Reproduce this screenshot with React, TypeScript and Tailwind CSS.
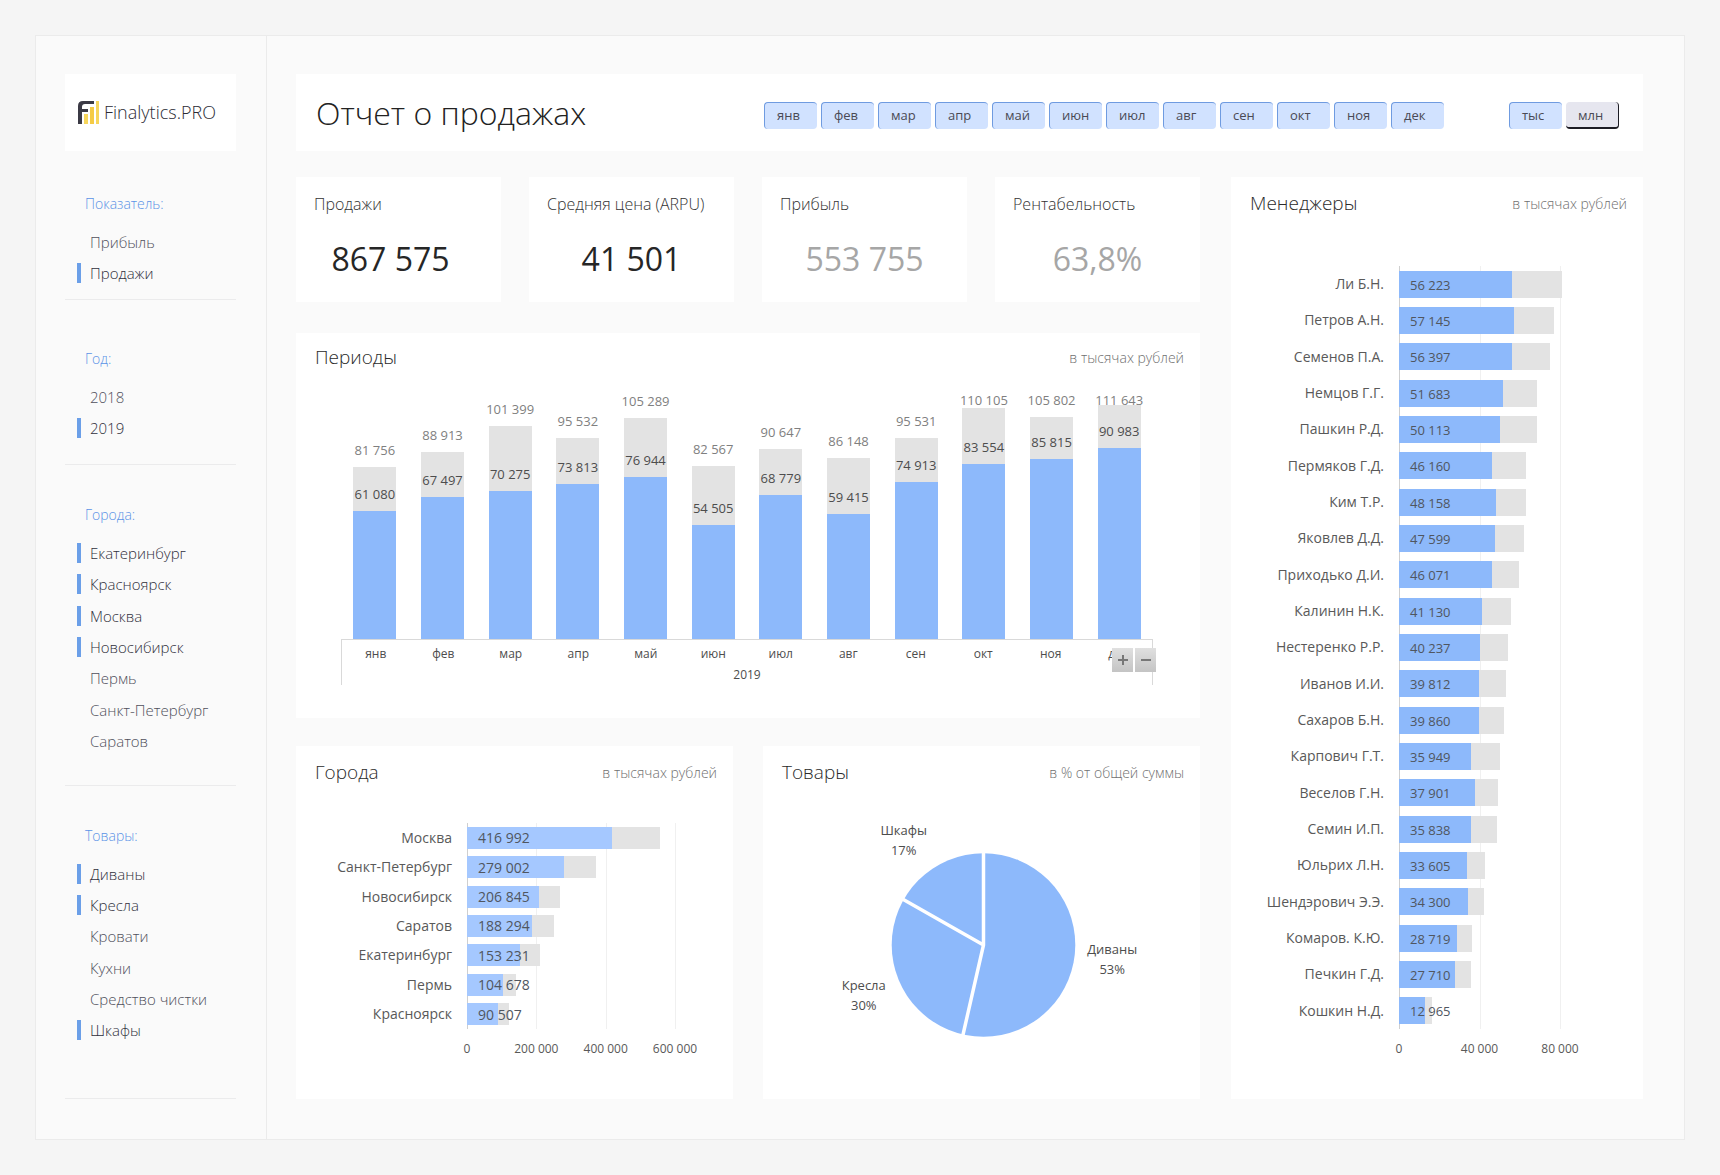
import { useState } from "react";

const months = ["янв", "фев", "мар", "апр", "май", "июн", "июл", "авг", "сен", "окт", "ноя", "дек"];

const filters = [
  { title: "Показатель:", items: ["Прибыль", "Продажи"], selected: ["Продажи"], pad: "pt-[43px] pb-[10px]", list: "h-[63px]" },
  { title: "Год:", items: ["2018", "2019"], selected: ["2019"], pad: "pt-[49px] pb-[20px]", list: "h-[63px]" },
  {
    title: "Города:",
    items: ["Екатеринбург", "Красноярск", "Москва", "Новосибирск", "Пермь", "Санкт-Петербург", "Саратов"],
    selected: ["Екатеринбург", "Красноярск", "Москва", "Новосибирск"],
    pad: "pt-[40px] pb-[28px]",
    list: "h-[220px]",
  },
  {
    title: "Товары:",
    items: ["Диваны", "Кресла", "Кровати", "Кухни", "Средство чистки", "Шкафы"],
    selected: ["Диваны", "Кресла", "Шкафы"],
    pad: "pt-[40px] pb-[52px]",
    list: "h-[188px]",
  },
];

const kpis = [
  { title: "Продажи", value: "867 575", tone: "text-[#262626] pr-4" },
  { title: "Средняя цена (ARPU)", value: "41 501", tone: "text-[#262626]" },
  { title: "Прибыль", value: "553 755", tone: "text-[#a6a6a6]" },
  { title: "Рентабельность", value: "63,8%", tone: "text-[#a6a6a6]" },
];

const periods = [
  [81756, 61080],
  [88913, 67497],
  [101399, 70275],
  [95532, 73813],
  [105289, 76944],
  [82567, 54505],
  [90647, 68779],
  [86148, 59415],
  [95531, 74913],
  [110105, 83554],
  [105802, 85815],
  [111643, 90983],
];

type Row = [string, number, number];

const cities: Row[] = [
  ["Москва", 416992, 557000],
  ["Санкт-Петербург", 279002, 373000],
  ["Новосибирск", 206845, 269000],
  ["Саратов", 188294, 250000],
  ["Екатеринбург", 153231, 212000],
  ["Пермь", 104678, 141000],
  ["Красноярск", 90507, 121000],
];

const managers: Row[] = [
  ["Ли Б.Н.", 56223, 80900],
  ["Петров А.Н.", 57145, 76900],
  ["Семенов П.А.", 56397, 75200],
  ["Немцов Г.Г.", 51683, 68600],
  ["Пашкин Р.Д.", 50113, 68600],
  ["Пермяков Г.Д.", 46160, 63000],
  ["Ким Т.Р.", 48158, 62900],
  ["Яковлев Д.Д.", 47599, 62300],
  ["Приходько Д.И.", 46071, 59700],
  ["Калинин Н.К.", 41130, 55800],
  ["Нестеренко Р.Р.", 40237, 54200],
  ["Иванов И.И.", 39812, 53100],
  ["Сахаров Б.Н.", 39860, 52000],
  ["Карпович Г.Т.", 35949, 50400],
  ["Веселов Г.Н.", 37901, 49000],
  ["Семин И.П.", 35838, 48500],
  ["Юльрих Л.Н.", 33605, 42900],
  ["Шендэрович Э.Э.", 34300, 42400],
  ["Комаров. К.Ю.", 28719, 36300],
  ["Печкин Г.Д.", 27710, 35800],
  ["Кошкин Н.Д.", 12965, 16600],
];

const fmt = (n: number) => String(n).replace(/\B(?=(\d{3})+$)/g, " ");

function Logo() {
  return (
    <svg width="22" height="23" viewBox="0 0 22 23" aria-hidden="true">
      <path d="M0 23V5Q0 0 5 0H16V3H7Q4 3 4 6V8H10V11H4V23Z" fill="#3b3a45" />
      <rect x="6" y="13" width="4" height="10" fill="#f7d65c" />
      <rect x="12" y="6" width="4" height="17" fill="#f5cb45" />
      <rect x="18" y="0" width="3" height="23" fill="#f7d65c" />
    </svg>
  );
}

function Filter({ title, items, selected, pad, list }: (typeof filters)[number]) {
  const [on, setOn] = useState(selected);
  const toggle = (item: string) => setOn(on.includes(item) ? on.filter((i) => i !== item) : [...on, item]);
  return (
    <section className={`border-b border-[#ebebec] ${pad}`}>
      <h2 className="pl-5 text-[14px] leading-5 font-light text-[#5b93e6]">{title}</h2>
      <ul className={`mt-3 flex flex-col ${list}`}>
        {items.map((item) => (
          <li key={item} className="flex flex-1">
            <button
              type="button"
              aria-pressed={on.includes(item)}
              onClick={() => toggle(item)}
              className="flex w-full items-center gap-[9px] pl-3 text-left text-[15px] leading-5 font-light whitespace-nowrap text-[#50505c] aria-pressed:text-[#30303c]"
            >
              <span className={on.includes(item) ? "h-5 w-1 bg-[#6b9fe8]" : "h-5 w-1"} />
              {item}
            </button>
          </li>
        ))}
      </ul>
    </section>
  );
}

function Chip({ label, pressed }: { label: string; pressed: boolean }) {
  const [on, setOn] = useState(pressed);
  return (
    <button
      type="button"
      aria-pressed={on}
      onClick={() => setOn(!on)}
      className="h-[27px] w-[53px] rounded-[4px] border-r border-b-2 border-[#1c1c24] bg-[#e6e6ef] pt-[3px] pl-3 text-left text-[13px] text-[#4a4a55] aria-pressed:border-t aria-pressed:border-r-0 aria-pressed:border-b-0 aria-pressed:border-l aria-pressed:border-[#6f9be0] aria-pressed:bg-[#d1e2ff] aria-pressed:pt-px"
    >
      {label}
    </button>
  );
}

function CardHead({ title, unit }: { title: string; unit: string }) {
  return (
    <div className="flex items-start justify-between pr-4 pl-[19px]">
      <h2 className="text-[19px] leading-6 font-light text-[#2b2b2b]">{title}</h2>
      <p className="pt-px text-[14px] leading-6 font-light text-[#707070]">{unit}</p>
    </div>
  );
}

function BarRows({
  rows,
  max,
  step,
  plot,
  names,
  bar,
  fill,
  valueSize,
}: {
  rows: Row[];
  max: number;
  step: number;
  plot: string;
  names: string;
  bar: string;
  fill: string;
  valueSize: string;
}) {
  const ticks = Array.from({ length: max / step + 1 }, (_, i) => i * step);
  return (
    <div className="flex">
      <div className={`flex shrink-0 flex-col pr-[15px] text-right text-[14px] leading-5 text-[#595959] ${names}`}>
        {rows.map(([name]) => (
          <div key={name} className="flex flex-1 items-center justify-end whitespace-nowrap">
            {name}
          </div>
        ))}
      </div>
      <div>
        <div className={`relative flex flex-col ${plot}`}>
          {ticks.map((t) => (
            <span
              key={t}
              className="absolute inset-y-0 w-px bg-[#f0f0f0] first:bg-[#cfcfcf]"
              style={{ left: `${(t / max) * 100}%` }}
            />
          ))}
          {rows.map(([name, value, total]) => (
            <div key={name} className="flex flex-1 items-center">
              <div className={`relative w-full ${bar}`}>
                <div className="absolute inset-y-0 left-0 bg-[#e3e3e3]" style={{ width: `${(total / max) * 100}%` }} />
                <div className={`absolute inset-y-0 left-0 ${fill}`} style={{ width: `${(value / max) * 100}%` }} />
                <span
                  className={`absolute inset-y-0 left-[11px] flex items-center pt-px leading-5 whitespace-nowrap text-[#505660] ${valueSize}`}
                >
                  {fmt(value)}
                </span>
              </div>
            </div>
          ))}
        </div>
        <div className="relative mt-[10px] h-5 text-[12px] leading-5 text-[#595959]">
          {ticks.map((t) => (
            <span
              key={t}
              className="absolute flex w-0 justify-center whitespace-nowrap"
              style={{ left: `${(t / max) * 100}%` }}
            >
              {fmt(t)}
            </span>
          ))}
        </div>
      </div>
    </div>
  );
}

function PeriodChart() {
  const scale = 0.0021;
  return (
    <div className="relative mr-[47px] ml-[45px]">
      <div className="flex h-[249px] text-[13px] leading-5">
        {periods.map(([total, value], i) => (
          <div key={months[i]} className="flex flex-1 justify-center">
            <div className="relative w-[43px]">
              <div className="absolute inset-x-0 bottom-0 bg-[#e3e3e3]" style={{ height: Math.round(total * scale) }} />
              <div className="absolute inset-x-0 bottom-0 bg-[#8db9fb]" style={{ height: Math.round(value * scale) }} />
              <span
                className="absolute inset-x-0 flex justify-center whitespace-nowrap text-[#7f7f7f]"
                style={{ bottom: Math.min(Math.round(total * scale) + 7, 229) }}
              >
                {fmt(total)}
              </span>
              <span
                className="absolute inset-x-0 flex justify-center whitespace-nowrap text-[#4d4d4d]"
                style={{ bottom: Math.round(value * scale) + 7 }}
              >
                {fmt(value)}
              </span>
            </div>
          </div>
        ))}
      </div>
      <div className="h-[46px] border-x border-t border-[#d9d9d9] pt-1 text-[12px] leading-5 text-[#4d4d4d]">
        <div className="flex">
          {months.map((m) => (
            <span key={m} className="flex-1 text-center">
              {m}
            </span>
          ))}
        </div>
        <p className="pt-px text-center">2019</p>
      </div>
      <div className="absolute right-[-3px] bottom-[13px] flex gap-[2px] bg-white">
        <button
          type="button"
          aria-label="Развернуть"
          className="flex h-6 w-[21px] items-center justify-center bg-linear-to-b from-[#e0e0e0] to-[#c4c4c4]"
        >
          <svg width="10" height="10" viewBox="0 0 10 10" aria-hidden="true">
            <path d="M5 0V10M0 5H10" stroke="#777" strokeWidth="2" />
          </svg>
        </button>
        <button
          type="button"
          aria-label="Свернуть"
          className="flex h-6 w-[21px] items-center justify-center bg-linear-to-b from-[#e0e0e0] to-[#c4c4c4]"
        >
          <svg width="10" height="10" viewBox="0 0 10 10" aria-hidden="true">
            <path d="M0 5H10" stroke="#777" strokeWidth="2" />
          </svg>
        </button>
      </div>
    </div>
  );
}

function PieChart() {
  return (
    <svg width="438" height="250" viewBox="0 0 438 250" className="text-[13px]" fill="#4d4d4d" textAnchor="middle">
      <circle cx="221" cy="145" r="92" fill="#8db9fb" />
      <path d="M221 51V145L200 237M221 145L138 98" stroke="#fff" strokeWidth="3.5" fill="none" />
      <text x="141" y="35">Шкафы</text>
      <text x="141" y="55">17%</text>
      <text x="350" y="154">Диваны</text>
      <text x="350" y="174">53%</text>
      <text x="101" y="190">Кресла</text>
      <text x="101" y="210">30%</text>
    </svg>
  );
}

export default function App() {
  return (
    <div className="min-h-screen bg-[#f5f5f5] p-[35px] font-['Open_Sans','Noto_Sans',sans-serif]">
      <div className="flex border border-[#ebebeb] bg-[#fafafa]">
        <aside className="w-[231px] shrink-0 border-r border-[#ebebeb] pt-[38px] pr-[30px] pl-[29px]">
          <div className="flex h-[77px] items-center gap-1 bg-white pb-px pl-[13px]">
            <Logo />
            <span className="text-[18px] leading-6 font-light text-[#2b2b35]">Finalytics.PRO</span>
          </div>
          {filters.map((f) => (
            <Filter key={f.title} {...f} />
          ))}
        </aside>

        <main className="min-w-0 flex-1 pt-[38px] pr-[41px] pb-10 pl-[29px]">
          <header className="flex h-[77px] items-center bg-white pr-6 pl-5">
            <h1 className="text-[32px] leading-10 font-light text-[#222]">Отчет о продажах</h1>
            <div className="ml-auto flex gap-[65px] pt-[5px]">
              <div className="flex gap-1">
                {months.map((m) => (
                  <Chip key={m} label={m} pressed />
                ))}
              </div>
              <div className="flex gap-1">
                <Chip label="тыс" pressed />
                <Chip label="млн" pressed={false} />
              </div>
            </div>
          </header>

          <div className="mt-[26px] grid grid-cols-[minmax(0,904fr)_minmax(0,412fr)] gap-[31px]">
            <div>
              <div className="grid grid-cols-4 gap-7">
                {kpis.map((k) => (
                  <section key={k.title} className="h-[125px] bg-white pt-[15px]">
                    <h2 className="pl-[18px] text-[16px] leading-6 font-light text-[#333]">{k.title}</h2>
                    <p className={`mt-[23px] text-center text-[32px] leading-10 ${k.tone}`}>{k.value}</p>
                  </section>
                ))}
              </div>

              <section className="mt-[31px] bg-white pt-3 pb-[33px]">
                <CardHead title="Периоды" unit="в тысячах рублей" />
                <div className="mt-5">
                  <PeriodChart />
                </div>
              </section>

              <div className="mt-7 grid grid-cols-2 gap-[30px]">
                <section className="bg-white pt-[14px]">
                  <CardHead title="Города" unit="в тысячах рублей" />
                  <div className="mt-[38px]">
                    <BarRows
                      rows={cities}
                      max={600000}
                      step={200000}
                      plot="h-[206px] w-[208px]"
                      names="h-[206px] w-[171px]"
                      bar="h-[22px]"
                      fill="bg-[#a5c8ff]"
                      valueSize="text-[14px]"
                    />
                  </div>
                </section>
                <section className="flex flex-col bg-white pt-[14px] pb-[49px]">
                  <CardHead title="Товары" unit="в % от общей суммы" />
                  <div className="mt-[15px] flex justify-center">
                    <PieChart />
                  </div>
                </section>
              </div>
            </div>

            <section className="bg-white pt-[14px]">
              <CardHead title="Менеджеры" unit="в тысячах рублей" />
              <div className="mt-[50px]">
                <BarRows
                  rows={managers}
                  max={80000}
                  step={40000}
                  plot="h-[763px] w-[161px]"
                  names="h-[763px] w-[168px]"
                  bar="h-[27px]"
                  fill="bg-[#8db9fb]"
                  valueSize="text-[13px]"
                />
              </div>
            </section>
          </div>
        </main>
      </div>
    </div>
  );
}
